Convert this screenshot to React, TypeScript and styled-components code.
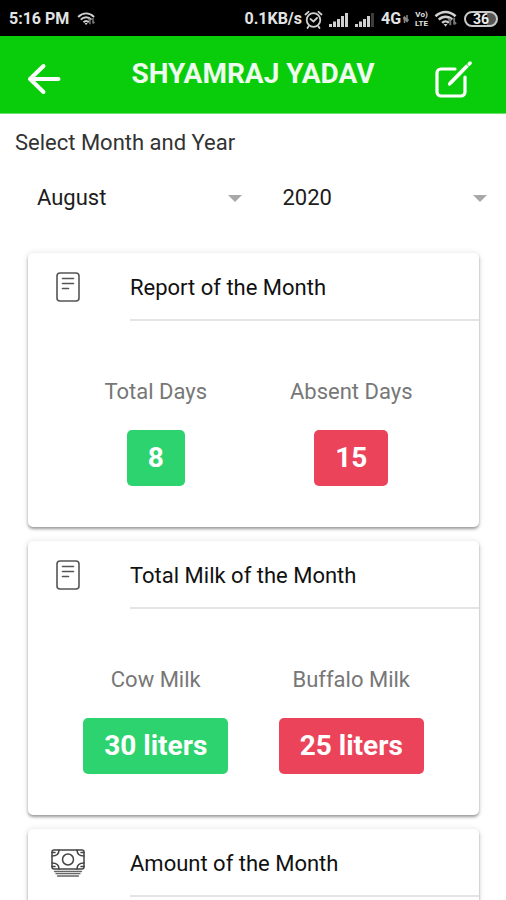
import React from "react";
import styled, { createGlobalStyle } from "styled-components";

const GlobalStyle = createGlobalStyle`
  * { box-sizing: border-box; }
  html { overflow-x: hidden; scrollbar-width: none; }
  body {
    margin: 0;
    background: #fff;
    color: #1c1c1c;
    font-family: Roboto, "Liberation Sans", sans-serif;
    font-size: 22px;
    line-height: 28px;
    scrollbar-width: none;
  }
`;

const StatusBar = styled.div`
  display: flex;
  align-items: center;
  justify-content: space-between;
  height: 36px;
  padding: 2px 8px 0 9px;
  background: #000;
  color: #e4e4e4;
  font-size: 16px;
  font-weight: 700;
  line-height: 20px;
`;

const StatusGroup = styled.div<{ $gap: number }>`
  display: flex;
  align-items: center;
  gap: ${(p) => p.$gap}px;
`;

const Network = styled.span`
  display: flex;
  align-items: center;
  gap: 2px;
`;

const Volte = styled.span`
  display: grid;
  font-size: 8px;
  line-height: 9px;
  text-align: center;
`;

const Battery = styled.span`
  width: 34px;
  height: 16px;
  border: 2px solid #c8c8c8;
  border-radius: 8px;
  background: linear-gradient(90deg, #000 70%, #555 70%);
  color: #eee;
  font-size: 14px;
  line-height: 12px;
  text-align: center;
`;

const AppBar = styled.header`
  display: grid;
  grid-template-columns: 1fr auto 1fr;
  align-items: center;
  height: 78px;
  padding: 8px 25px 0;
  border-bottom: 1px solid #6be26c;
  background: #09cd0a;
  color: #fff;
`;

const Title = styled.h1`
  margin: 0;
  padding-bottom: 10px;
  color: #eefbee;
  font-size: 28px;
  font-weight: 700;
  line-height: 32px;
`;

const IconButton = styled.button<{ $side: "start" | "end" }>`
  display: flex;
  justify-self: ${(p) => p.$side};
  padding: 0;
  border: 0;
  background: none;
  color: inherit;
  cursor: pointer;
`;

const Period = styled.fieldset`
  min-width: 0;
  margin: 0;
  padding: 0 0 0 15px;
  border: 0;
`;

const PeriodTitle = styled.legend`
  padding: 15px 0 13px;
  color: #333;
`;

const Pickers = styled.div`
  display: grid;
  grid-template-columns: 1fr 1fr;
`;

const Picker = styled.label`
  display: grid;
  align-items: center;
  grid-template-columns: 1fr 14px;
  padding-right: 19px;
`;

const Select = styled.select`
  grid-area: 1 / 1 / 2 / 3;
  height: 56px;
  width: 100%;
  padding: 0 22px;
  border: 0;
  appearance: none;
  background: transparent;
  color: #1c1c1c;
  font: inherit;
`;

const Caret = styled.span`
  grid-area: 1 / 2;
  border: 7px solid transparent;
  border-top-color: #a8a8a8;
  border-bottom: 0;
  pointer-events: none;
`;

const Cards = styled.main`
  display: grid;
  gap: 14px;
  padding: 27px 27px 28px 28px;
`;

const Card = styled.section`
  border-radius: 5px;
  background: #fff;
  box-shadow: 0 2px 3px rgba(0, 0, 0, 0.36), 0 0 7px rgba(0, 0, 0, 0.1);
`;

const CardHeader = styled.div`
  display: grid;
  grid-template-columns: 80px 1fr;
  gap: 22px;
  align-items: center;
`;

const CardIcon = styled.span`
  display: flex;
  justify-content: center;
`;

const CardTitle = styled.h2`
  margin: 0;
  padding: 21px 0 17px;
  border-bottom: 2px solid #e4e4e4;
  color: #111;
  font-size: 22px;
  font-weight: 400;
`;

const Stats = styled.div`
  display: grid;
  grid-template-columns: 1fr 1fr;
  padding: 57px 30px 41px;
`;

const Stat = styled.div`
  display: flex;
  flex-direction: column;
  align-items: center;
  gap: 24px;
`;

const StatLabel = styled.span`
  color: #777;
`;

const Badge = styled.strong<{ $tone: "good" | "bad" }>`
  padding: 12px 21px;
  border-radius: 5px;
  background: ${(p) => (p.$tone === "good" ? "#2dd36f" : "#eb445a")};
  color: #fff;
  font-size: 28px;
  font-weight: 700;
  line-height: 32px;
`;

const WifiIcon = ({ size }: { size: number }) => (
  <svg width={size} height={size * 0.72} viewBox="0 0 25 18" fill="none" stroke="#d0d0d0" strokeWidth="2.6">
    <path d="M1.500 6.500C8 .5 16 .5 22.500 6.500M5 10c4-4 10-4 14 0M8.500 13.500c2-2 5-2 7 0" />
    <path d="M10 14.500h4l-2 3z" fill="#d0d0d0" stroke="none" />
    <path d="M17 16V9m0 0-2 2m6-3v7m0 0 2-2" stroke="#777" strokeWidth="2" />
  </svg>
);

const SignalIcon = ({ weak }: { weak?: boolean }) => (
  <svg width="20" height="15" viewBox="0 0 20 15" fill="#d0d0d0">
    <path d="M0 12h3v3H0zM4 9.500h3V15H4zM8 7h3v8H8zM12 4h3v11h-3z" />
    <path d="M16 1h3v14h-3z" fill={weak ? "#3c3c3c" : "#d0d0d0"} />
  </svg>
);

const AlarmIcon = () => (
  <svg width="19" height="19" viewBox="0 0 19 19" fill="none" stroke="#d0d0d0" strokeWidth="1.800" strokeLinecap="round">
    <circle cx="9.500" cy="10" r="6.800" />
    <path d="M6.500 9l3 2.500L13 8M1.500 4.500l3-2.700M17.500 4.500l-3-2.700M4.500 16.500L3.500 18M14.500 16.500l1 1.500" />
  </svg>
);

const DataIcon = () => (
  <svg width="6" height="8" viewBox="0 0 6 8" stroke="#888" strokeWidth="1.500" fill="none">
    <path d="M1.500 8V2.500M4 0v6M0 4l1.500-2L3 4M2.500 4.500L4 6.500l1.500-2" />
  </svg>
);

const BackIcon = () => (
  <svg width="38" height="36" viewBox="0 0 38 36" fill="none" stroke="currentColor" strokeWidth="4" strokeLinecap="round" strokeLinejoin="round">
    <path d="M18.500 5L5 18l13.500 13M5 18h28.500" />
  </svg>
);

const EditIcon = () => (
  <svg width="48" height="40" viewBox="0 0 48 40" fill="none" stroke="currentColor" strokeWidth="3.200" strokeLinecap="round" strokeLinejoin="round">
    <path d="M22 10H8a4 4 0 0 0-4 4v19a4 4 0 0 0 4 4h20a4 4 0 0 0 4-4V18" />
    <path d="M17.500 24l17-17.500" strokeLinecap="butt" strokeWidth="3.800" />
    <path d="M16.500 25l1.500-1.500" />
    <path d="M36.200 5l.9-.9" strokeWidth="3.600" />
  </svg>
);

const ReportIcon = () => (
  <svg width="24" height="30" viewBox="0 0 24 30" fill="none" stroke="#555" strokeWidth="1.600" strokeLinecap="round">
    <rect x="1" y="1" width="22" height="28" rx="3" />
    <path d="M6.500 6.500h11M6.500 11.500h11M6.500 16.500h6" />
  </svg>
);

const CashIcon = () => (
  <svg width="34" height="28" viewBox="0 0 34 28" fill="none" stroke="#444" strokeWidth="1.500" strokeLinecap="round">
    <rect x="1" y="1" width="32" height="19" rx="2" />
    <circle cx="17" cy="10.500" r="5.500" />
    <path d="M8 1c0 4-3 6-7 6M26 1c0 4 3 6 7 6M8 20c0-4-3-6-7-6M26 20c0-4 3-6 7-6M1 3.500h3M30 3.500h3M1 17.500h3M30 17.500h3" />
    <path d="M3.500 22.500h27M5 24.700h24M6.500 27h21" stroke="#666" strokeWidth="1.300" />
  </svg>
);

type StatItem = { label: string; value: string };
type CardItem = { title: string; icon: React.ReactNode; stats: StatItem[] };

const cards: CardItem[] = [
  {
    title: "Report of the Month",
    icon: <ReportIcon />,
    stats: [
      { label: "Total Days", value: "8" },
      { label: "Absent Days", value: "15" },
    ],
  },
  {
    title: "Total Milk of the Month",
    icon: <ReportIcon />,
    stats: [
      { label: "Cow Milk", value: "30 liters" },
      { label: "Buffalo Milk", value: "25 liters" },
    ],
  },
  { title: "Amount of the Month", icon: <CashIcon />, stats: [] },
];

export default function App() {
  return (
    <>
      <GlobalStyle />
      <StatusBar>
        <StatusGroup $gap={8}>
          <span>5:16 PM</span>
          <WifiIcon size={19} />
        </StatusGroup>
        <StatusGroup $gap={6}>
          <Network>
            <span>0.1KB/s</span>
            <AlarmIcon />
          </Network>
          <SignalIcon />
          <SignalIcon weak />
          <Network>
            <span>4G</span>
            <DataIcon />
          </Network>
          <Volte>
            <span>Vo)</span>
            <span>LTE</span>
          </Volte>
          <WifiIcon size={24} />
          <Battery>36</Battery>
        </StatusGroup>
      </StatusBar>
      <AppBar>
        <IconButton type="button" aria-label="Back" $side="start">
          <BackIcon />
        </IconButton>
        <Title>SHYAMRAJ YADAV</Title>
        <IconButton type="button" aria-label="Edit" $side="end">
          <EditIcon />
        </IconButton>
      </AppBar>
      <Period>
        <PeriodTitle>Select Month and Year</PeriodTitle>
        <Pickers>
          <Picker>
            <Select aria-label="Month" defaultValue="August">
              <option>August</option>
            </Select>
            <Caret />
          </Picker>
          <Picker>
            <Select aria-label="Year" defaultValue="2020">
              <option>2020</option>
            </Select>
            <Caret />
          </Picker>
        </Pickers>
      </Period>
      <Cards>
        {cards.map((card) => (
          <Card key={card.title}>
            <CardHeader>
              <CardIcon>{card.icon}</CardIcon>
              <CardTitle>{card.title}</CardTitle>
            </CardHeader>
            <Stats>
              {card.stats.map((stat, i) => (
                <Stat key={stat.label}>
                  <StatLabel>{stat.label}</StatLabel>
                  <Badge $tone={i === 0 ? "good" : "bad"}>{stat.value}</Badge>
                </Stat>
              ))}
            </Stats>
          </Card>
        ))}
      </Cards>
    </>
  );
}
